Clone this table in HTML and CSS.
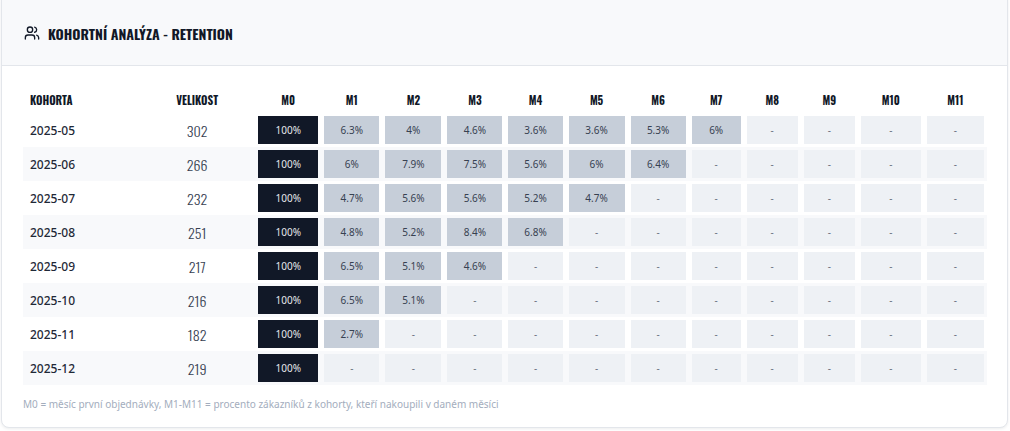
FILE: index.html
```html
<!DOCTYPE html>
<html lang="cs">
<head>
<meta charset="utf-8">
<title>Kohortní analýza</title>
<link rel="stylesheet" href="styles.css">
</head>
<body>
<div class="page">
  <div class="card">
    <div class="card-header">
      <svg class="icon" viewBox="0 0 24 24" width="16" height="16" fill="none" stroke="currentColor" stroke-width="2" stroke-linecap="round" stroke-linejoin="round">
        <path d="M16 21v-2a4 4 0 0 0-4-4H6a4 4 0 0 0-4 4v2"/>
        <circle cx="9" cy="7" r="4"/>
        <path d="M22 21v-2a4 4 0 0 0-3-3.87"/>
        <path d="M16 3.13a4 4 0 0 1 0 7.75"/>
      </svg>
      <h2 class="title">Kohortní analýza - Retention</h2>
    </div>
    <div class="card-body">
      <table class="cohort">
        <thead>
          <tr>
            <th class="h-left">Kohorta</th>
            <th>Velikost</th>
            <th>M0</th><th>M1</th><th>M2</th><th>M3</th><th>M4</th><th>M5</th>
            <th>M6</th><th>M7</th><th>M8</th><th>M9</th><th>M10</th><th>M11</th>
          </tr>
        </thead>
        <tbody>
          <tr>
            <td class="name">2025-05</td><td class="size">302</td>
            <td><div class="cell base">100%</div></td>
            <td><div class="cell fill">6.3%</div></td>
            <td><div class="cell fill">4%</div></td>
            <td><div class="cell fill">4.6%</div></td>
            <td><div class="cell fill">3.6%</div></td>
            <td><div class="cell fill">3.6%</div></td>
            <td><div class="cell fill">5.3%</div></td>
            <td><div class="cell fill">6%</div></td>
            <td><div class="cell empty">-</div></td>
            <td><div class="cell empty">-</div></td>
            <td><div class="cell empty">-</div></td>
            <td><div class="cell empty">-</div></td>
          </tr>
          <tr class="alt">
            <td class="name">2025-06</td><td class="size">266</td>
            <td><div class="cell base">100%</div></td>
            <td><div class="cell fill">6%</div></td>
            <td><div class="cell fill">7.9%</div></td>
            <td><div class="cell fill">7.5%</div></td>
            <td><div class="cell fill">5.6%</div></td>
            <td><div class="cell fill">6%</div></td>
            <td><div class="cell fill">6.4%</div></td>
            <td><div class="cell empty">-</div></td>
            <td><div class="cell empty">-</div></td>
            <td><div class="cell empty">-</div></td>
            <td><div class="cell empty">-</div></td>
            <td><div class="cell empty">-</div></td>
          </tr>
          <tr>
            <td class="name">2025-07</td><td class="size">232</td>
            <td><div class="cell base">100%</div></td>
            <td><div class="cell fill">4.7%</div></td>
            <td><div class="cell fill">5.6%</div></td>
            <td><div class="cell fill">5.6%</div></td>
            <td><div class="cell fill">5.2%</div></td>
            <td><div class="cell fill">4.7%</div></td>
            <td><div class="cell empty">-</div></td>
            <td><div class="cell empty">-</div></td>
            <td><div class="cell empty">-</div></td>
            <td><div class="cell empty">-</div></td>
            <td><div class="cell empty">-</div></td>
            <td><div class="cell empty">-</div></td>
          </tr>
          <tr class="alt">
            <td class="name">2025-08</td><td class="size">251</td>
            <td><div class="cell base">100%</div></td>
            <td><div class="cell fill">4.8%</div></td>
            <td><div class="cell fill">5.2%</div></td>
            <td><div class="cell fill">8.4%</div></td>
            <td><div class="cell fill">6.8%</div></td>
            <td><div class="cell empty">-</div></td>
            <td><div class="cell empty">-</div></td>
            <td><div class="cell empty">-</div></td>
            <td><div class="cell empty">-</div></td>
            <td><div class="cell empty">-</div></td>
            <td><div class="cell empty">-</div></td>
            <td><div class="cell empty">-</div></td>
          </tr>
          <tr>
            <td class="name">2025-09</td><td class="size">217</td>
            <td><div class="cell base">100%</div></td>
            <td><div class="cell fill">6.5%</div></td>
            <td><div class="cell fill">5.1%</div></td>
            <td><div class="cell fill">4.6%</div></td>
            <td><div class="cell empty">-</div></td>
            <td><div class="cell empty">-</div></td>
            <td><div class="cell empty">-</div></td>
            <td><div class="cell empty">-</div></td>
            <td><div class="cell empty">-</div></td>
            <td><div class="cell empty">-</div></td>
            <td><div class="cell empty">-</div></td>
            <td><div class="cell empty">-</div></td>
          </tr>
          <tr class="alt">
            <td class="name">2025-10</td><td class="size">216</td>
            <td><div class="cell base">100%</div></td>
            <td><div class="cell fill">6.5%</div></td>
            <td><div class="cell fill">5.1%</div></td>
            <td><div class="cell empty">-</div></td>
            <td><div class="cell empty">-</div></td>
            <td><div class="cell empty">-</div></td>
            <td><div class="cell empty">-</div></td>
            <td><div class="cell empty">-</div></td>
            <td><div class="cell empty">-</div></td>
            <td><div class="cell empty">-</div></td>
            <td><div class="cell empty">-</div></td>
            <td><div class="cell empty">-</div></td>
          </tr>
          <tr>
            <td class="name">2025-11</td><td class="size">182</td>
            <td><div class="cell base">100%</div></td>
            <td><div class="cell fill">2.7%</div></td>
            <td><div class="cell empty">-</div></td>
            <td><div class="cell empty">-</div></td>
            <td><div class="cell empty">-</div></td>
            <td><div class="cell empty">-</div></td>
            <td><div class="cell empty">-</div></td>
            <td><div class="cell empty">-</div></td>
            <td><div class="cell empty">-</div></td>
            <td><div class="cell empty">-</div></td>
            <td><div class="cell empty">-</div></td>
            <td><div class="cell empty">-</div></td>
          </tr>
          <tr class="alt">
            <td class="name">2025-12</td><td class="size">219</td>
            <td><div class="cell base">100%</div></td>
            <td><div class="cell empty">-</div></td>
            <td><div class="cell empty">-</div></td>
            <td><div class="cell empty">-</div></td>
            <td><div class="cell empty">-</div></td>
            <td><div class="cell empty">-</div></td>
            <td><div class="cell empty">-</div></td>
            <td><div class="cell empty">-</div></td>
            <td><div class="cell empty">-</div></td>
            <td><div class="cell empty">-</div></td>
            <td><div class="cell empty">-</div></td>
            <td><div class="cell empty">-</div></td>
          </tr>
        </tbody>
      </table>
      <p class="note">M0 = měsíc první objednávky, M1-M11 = procento zákazníků z kohorty, kteří nakoupili v daném měsíci</p>
    </div>
  </div>
</div>
</body>
</html>
```

FILE: styles.css
```css
html, body {
  margin: 0;
  padding: 0;
  background: #ffffff;
  font-family: "Noto Sans", "Open Sans", sans-serif;
  color: #1f2937;
}

.page {
  padding: 0 2px 3px 1px;
  overflow: hidden;
  height: 431px;
  box-sizing: border-box;
}

.card {
  margin-top: -8px;
  background: #ffffff;
  border: 1px solid #e3e6eb;
  border-radius: 8px;
  box-shadow: 0 1px 3px rgba(15, 23, 42, 0.08);
  overflow: hidden;
}

.card-header {
  height: 73px;
  box-sizing: border-box;
  padding: 8px 22px 0;
  display: flex;
  align-items: center;
  gap: 8px;
  background: #f8f9fb;
  border-bottom: 1px solid #e3e6eb;
}

.icon {
  color: #111827;
  flex: none;
}

.title {
  margin: 0;
  font-family: "Oswald", "Roboto Condensed", sans-serif;
  font-weight: 700;
  font-size: 14px;
  text-transform: uppercase;
  color: #111827;
}

.card-body {
  padding: 21px 20px 15px 21px;
}

.cohort {
  width: 964px;
  table-layout: fixed;
  border-collapse: separate;
  border-spacing: 0;
}

.cohort th {
  box-sizing: border-box;
  height: 26px;
  padding: 0;
  font-family: "Oswald", "Roboto Condensed", sans-serif;
  font-weight: 700;
  font-size: 11px;
  text-transform: uppercase;
  color: #111827;
  text-align: center;
  vertical-align: middle;
}

.cohort th.h-left {
  text-align: left;
  padding-left: 7px;
}

.cohort th:nth-child(1) { width: 116px; }
.cohort th:nth-child(2) { width: 116px; }
.cohort th:nth-child(3) { width: 66px; }
.cohort th:nth-child(4) { width: 61px; }
.cohort th:nth-child(5) { width: 62px; }
.cohort th:nth-child(6) { width: 61px; }
.cohort th:nth-child(7) { width: 60px; }
.cohort th:nth-child(8) { width: 62px; }
.cohort th:nth-child(9) { width: 61px; }
.cohort th:nth-child(10) { width: 55px; }
.cohort th:nth-child(11) { width: 57px; }
.cohort th:nth-child(12) { width: 57px; }
.cohort th:nth-child(13) { width: 66px; }
.cohort th:nth-child(14) { width: 63px; }

.cohort td {
  padding: 3px;
  height: 28px;
  vertical-align: middle;
}

.cohort tr.alt td {
  background: #f8f9fb;
}

.cohort td.name {
  padding-left: 7px;
  font-size: 12px;
  font-weight: 500;
  color: #1f2937;
}

.cohort td.size {
  text-align: center;
  font-family: "Oswald", "Roboto Condensed", sans-serif;
  font-weight: 300;
  font-size: 14px;
  color: #374151;
}

.cell {
  height: 28px;
  display: flex;
  align-items: center;
  justify-content: center;
  font-size: 10px;
  color: #374151;
}

.cell.base {
  background: #111827;
  color: #e5e7eb;
}

.cell.fill {
  background: #c6ced9;
  color: #374151;
}

.cell.empty {
  background: #eef1f5;
  color: #6b7280;
}

.note {
  margin: 11px 0 0;
  font-size: 10px;
  line-height: 16px;
  color: #a3adbd;
}
```
